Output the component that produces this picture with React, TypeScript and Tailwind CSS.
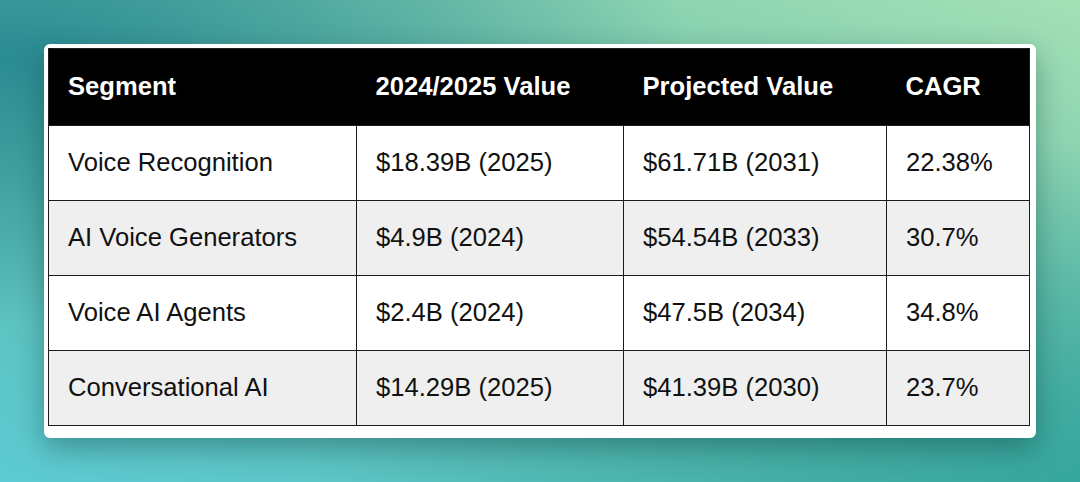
import React from 'react'

type Row = {
  segment: string
  current: string
  projected: string
  cagr: string
}

const ROWS: Row[] = [
  { segment: 'Voice Recognition', current: '$18.39B (2025)', projected: '$61.71B (2031)', cagr: '22.38%' },
  { segment: 'AI Voice Generators', current: '$4.9B (2024)', projected: '$54.54B (2033)', cagr: '30.7%' },
  { segment: 'Voice AI Agents', current: '$2.4B (2024)', projected: '$47.5B (2034)', cagr: '34.8%' },
  { segment: 'Conversational AI', current: '$14.29B (2025)', projected: '$41.39B (2030)', cagr: '23.7%' },
]

const HEADERS = ['Segment', '2024/2025 Value', 'Projected Value', 'CAGR']

export default function App() {
  return (
    <div
      className="w-[1080px] h-[482px] overflow-hidden pt-[44px] pl-[44px] bg-[radial-gradient(ellipse_at_0%_12%,#2a8b93_0%,transparent_45%),radial-gradient(ellipse_at_100%_100%,#36a69e_0%,transparent_50%),linear-gradient(20deg,#5dcbd4_0%,#5cb8a8_45%,#a4e1b6_100%)]"
      style={{ fontFamily: '"Liberation Sans", Arial, sans-serif' }}
    >
      {/* card */}
      <div className="w-[992px] rounded-[6px] bg-white pt-[4px] pl-[4px] pr-[7px] pb-[12px] shadow-[0_10px_28px_rgba(0,40,40,0.35)]">
        <table className="w-[981px] table-fixed border-collapse border-[1.5px] border-[#1c1c1c] text-[25.6px] leading-none text-[#111]">
          <colgroup>
            <col className="w-[308px]" />
            <col className="w-[267px]" />
            <col className="w-[263px]" />
            <col className="w-[143px]" />
          </colgroup>
          <thead>
            <tr className="h-[77px] bg-black">
              {HEADERS.map((h) => (
                <th key={h} className="px-[19px] text-left font-bold text-white">
                  {h}
                </th>
              ))}
            </tr>
          </thead>
          <tbody>
            {ROWS.map((r, i) => (
              <tr key={r.segment} className={i % 2 === 1 ? 'h-[75px] bg-[#efefef]' : 'h-[75px] bg-white'}>
                {[r.segment, r.current, r.projected, r.cagr].map((v, j) => (
                  <td key={j} className="border-[1.5px] border-[#1c1c1c] px-[19px]">
                    {v}
                  </td>
                ))}
              </tr>
            ))}
          </tbody>
        </table>
      </div>
    </div>
  )
}
